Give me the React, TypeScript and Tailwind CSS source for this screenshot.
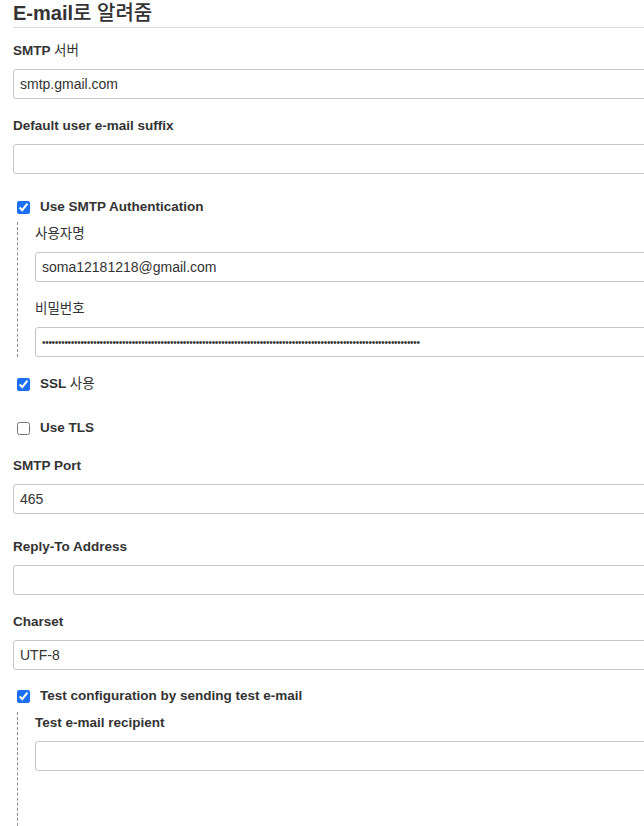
import React from 'react';

const font = { fontFamily: '"Liberation Sans", "Noto Sans CJK KR", sans-serif' };

// Korean glyphs render lighter than the Latin text in the reference
const Ko = ({ children }: { children: React.ReactNode }) => <span className="font-normal">{children}</span>;

function Label({ children, className = '' }: { children: React.ReactNode; className?: string }) {
  return <div className={`h-5 leading-5 text-[13.5px] font-bold text-[#333] ${className}`}>{children}</div>;
}

function Field({ label, value = '', type = 'text', className = '' }: { label: React.ReactNode; value?: string; type?: string; className?: string }) {
  const pw = type === 'password';
  return (
    <div className={className}>
      <Label>{label}</Label>
      <input
        type={type}
        defaultValue={value}
        readOnly
        className={`mt-2 block w-full h-[30px] border border-[#c6c6c6] rounded-[3px] px-[6px] text-[#333] bg-white outline-none ${pw ? 'text-[10px] tracking-[-0.3px]' : 'text-[14px]'}`}
        style={font}
      />
    </div>
  );
}

function Check({ label, checked, className = '' }: { label: React.ReactNode; checked: boolean; className?: string }) {
  return (
    <label className={`flex items-center h-5 ml-[4px] ${className}`}>
      <input type="checkbox" defaultChecked={checked} className="m-0 w-[13px] h-[13px] accent-[#1b6ff5]" />
      <span className="ml-[10px] text-[13.5px] font-bold text-[#333]">{label}</span>
    </label>
  );
}

export default function App() {
  return (
    <div className="w-[644px] h-[826px] overflow-hidden bg-white" style={font}>
      <div className="w-[740px] pl-[13px]">
        <h2 className="h-[28px] leading-[27px] text-[20px] font-bold text-[#333] border-b border-[#dcdcdc]">
          E-mail<span className="font-medium">로 알려줌</span>
        </h2>

        <Field label={<>SMTP <Ko>서버</Ko></>} value="smtp.gmail.com" className="mt-[13px]" />
        <Field label="Default user e-mail suffix" className="mt-[17px]" />

        <Check label="Use SMTP Authentication" checked className="mt-[23px]" />
        <div className="mt-[5px] ml-[4px] pl-[17px] pt-[2px] border-l border-dashed border-[#8a8a8a]">
          <Field label={<Ko>사용자명</Ko>} value="soma12181218@gmail.com" />
          <Field label={<Ko>비밀번호</Ko>} type="password" value={'x'.repeat(118)} className="mt-[17px]" />
        </div>

        <Check label={<>SSL <Ko>사용</Ko></>} checked className="mt-[17px]" />
        <Check label="Use TLS" checked={false} className="mt-[24px]" />

        <Field label="SMTP Port" value="465" className="mt-[18px]" />
        <Field label="Reply-To Address" className="mt-[23px]" />
        <Field label="Charset" value="UTF-8" className="mt-[17px]" />

        <Check label="Test configuration by sending test e-mail" checked className="mt-[16px]" />
        <div className="mt-[6px] ml-[4px] pl-[17px] pt-[1px] pb-[80px] border-l border-dashed border-[#8a8a8a]">
          <Field label="Test e-mail recipient" />
        </div>
      </div>
    </div>
  );
}
